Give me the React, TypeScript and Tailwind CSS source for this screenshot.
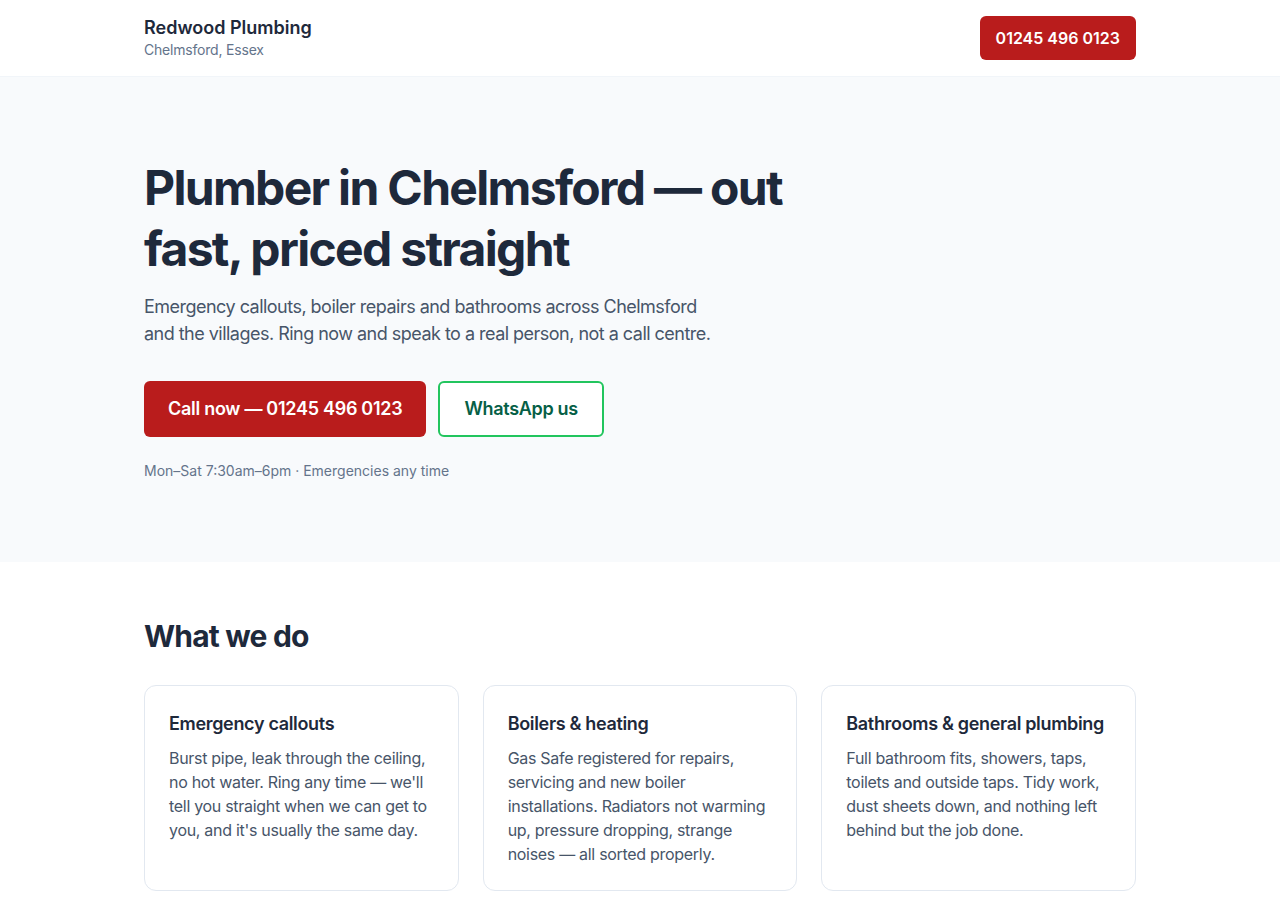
export default function App() {
  const services = [
    {
      title: "Emergency callouts",
      body: "Burst pipe, leak through the ceiling, no hot water. Ring any time — we'll tell you straight when we can get to you, and it's usually the same day.",
    },
    {
      title: "Boilers & heating",
      body: "Gas Safe registered for repairs, servicing and new boiler installations. Radiators not warming up, pressure dropping, strange noises — all sorted properly.",
    },
    {
      title: "Bathrooms & general plumbing",
      body: "Full bathroom fits, showers, taps, toilets and outside taps. Tidy work, dust sheets down, and nothing left behind but the job done.",
    },
  ];

  return (
    <div className="min-h-screen bg-white font-['Inter',sans-serif] text-[#1e293b]">
      <header className="border-b border-[#f1f5f9] bg-white">
        <div className="mx-auto flex max-w-[992px] items-center justify-between py-4">
          <div className="flex flex-col">
            <span className="text-lg font-semibold leading-6 text-[#1e293b]">Redwood Plumbing</span>
            <span className="text-sm leading-5 tracking-[-0.2px] text-[#64748b]">Chelmsford, Essex</span>
          </div>
          <a className="rounded-md bg-[#b91c1c] px-4 py-2.5 text-base font-semibold leading-6 text-white">
            01245 496 0123
          </a>
        </div>
      </header>

      <section className="bg-[#f8fafc]">
        <div className="mx-auto max-w-[992px] pb-[81px] pt-20">
          <h1 className="max-w-2xl text-5xl font-bold leading-[61px] tracking-[-0.035em] text-[#1e293b]">
            Plumber in Chelmsford — out fast, priced straight
          </h1>
          <p className="mt-3.5 max-w-[580px] text-lg leading-[27px] tracking-[-0.52px] text-[#475569]">
            Emergency callouts, boiler repairs and bathrooms across Chelmsford and the villages. Ring now and speak to a real person, not a call centre.
          </p>
          <div className="mt-[34px] flex gap-3">
            <a className="rounded-md bg-[#b91c1c] px-6 py-3.5 text-lg font-semibold leading-7 tracking-[-0.28px] text-white">
              Call now — 01245 496 0123
            </a>
            <a className="rounded-md border-2 border-[#22c55e] bg-white px-6 py-3 text-lg font-semibold leading-7 tracking-[-0.3px] text-[#065f46]">
              WhatsApp us
            </a>
          </div>
          <p className="mt-6 text-sm leading-5 text-[#64748b]">Mon–Sat 7:30am–6pm · Emergencies any time</p>
        </div>
      </section>

      <section className="bg-white">
        <div className="mx-auto max-w-[992px] pb-16 pt-14">
          <h2 className="text-3xl font-bold leading-9 tracking-[-0.8px] text-[#1e293b]">What we do</h2>
          <div className="mt-[31px] grid grid-cols-3 gap-6">
            {services.map((s) => (
              <div key={s.title} className="rounded-xl border border-[#e2e8f0] bg-white p-6">
                <h3 className="text-lg font-semibold leading-7 tracking-[-0.33px] text-[#1e293b]">{s.title}</h3>
                <p className="mt-2 text-base leading-6 tracking-[-0.3px] text-[#475569]">{s.body}</p>
              </div>
            ))}
          </div>
        </div>
      </section>
    </div>
  );
}
